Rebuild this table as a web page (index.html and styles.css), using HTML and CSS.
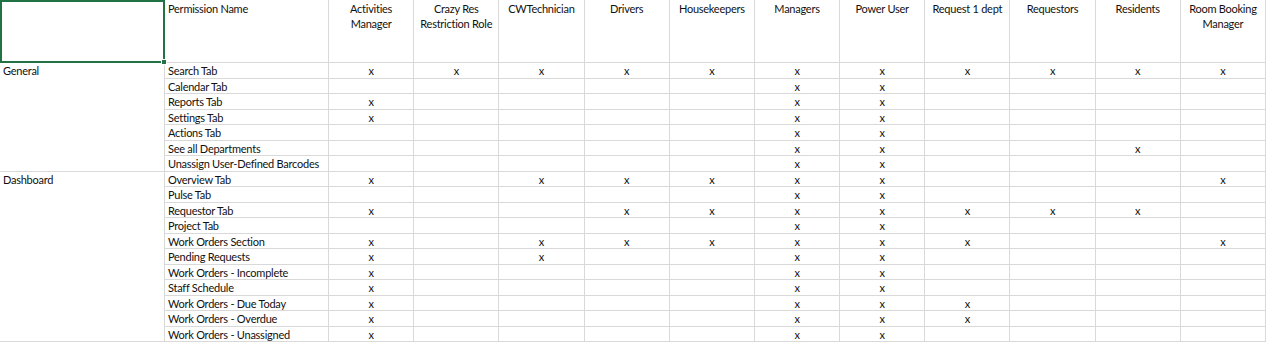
FILE: index.html
```html
<!DOCTYPE html>
<html>
<head>
<meta charset="utf-8">
<link rel="stylesheet" href="styles.css">
</head>
<body>
<div class="sheet">
  <div class="cell a1"><div class="sel"><span class="handle"></span></div></div>
  <div class="cell hd name">Permission Name</div>
  <div class="cell hd">Activities<br>Manager</div>
  <div class="cell hd">Crazy Res<br>Restriction Role</div>
  <div class="cell hd">CWTechnician</div>
  <div class="cell hd">Drivers</div>
  <div class="cell hd">Housekeepers</div>
  <div class="cell hd">Managers</div>
  <div class="cell hd">Power User</div>
  <div class="cell hd">Request 1 dept</div>
  <div class="cell hd">Requestors</div>
  <div class="cell hd">Residents</div>
  <div class="cell hd">Room Booking<br>Manager</div>

  <div class="cell grp grp-general">General</div>
  <div class="cell grp grp-dash">Dashboard</div>

  <div class="cell name">Search Tab</div>
  <div class="cell">x</div><div class="cell">x</div><div class="cell">x</div><div class="cell">x</div><div class="cell">x</div><div class="cell">x</div><div class="cell">x</div><div class="cell">x</div><div class="cell">x</div><div class="cell">x</div><div class="cell">x</div>

  <div class="cell name">Calendar Tab</div>
  <div class="cell"></div><div class="cell"></div><div class="cell"></div><div class="cell"></div><div class="cell"></div><div class="cell">x</div><div class="cell">x</div><div class="cell"></div><div class="cell"></div><div class="cell"></div><div class="cell"></div>

  <div class="cell name">Reports Tab</div>
  <div class="cell">x</div><div class="cell"></div><div class="cell"></div><div class="cell"></div><div class="cell"></div><div class="cell">x</div><div class="cell">x</div><div class="cell"></div><div class="cell"></div><div class="cell"></div><div class="cell"></div>

  <div class="cell name">Settings Tab</div>
  <div class="cell">x</div><div class="cell"></div><div class="cell"></div><div class="cell"></div><div class="cell"></div><div class="cell">x</div><div class="cell">x</div><div class="cell"></div><div class="cell"></div><div class="cell"></div><div class="cell"></div>

  <div class="cell name">Actions Tab</div>
  <div class="cell"></div><div class="cell"></div><div class="cell"></div><div class="cell"></div><div class="cell"></div><div class="cell">x</div><div class="cell">x</div><div class="cell"></div><div class="cell"></div><div class="cell"></div><div class="cell"></div>

  <div class="cell name">See all Departments</div>
  <div class="cell"></div><div class="cell"></div><div class="cell"></div><div class="cell"></div><div class="cell"></div><div class="cell">x</div><div class="cell">x</div><div class="cell"></div><div class="cell"></div><div class="cell">x</div><div class="cell"></div>

  <div class="cell name">Unassign User-Defined Barcodes</div>
  <div class="cell"></div><div class="cell"></div><div class="cell"></div><div class="cell"></div><div class="cell"></div><div class="cell">x</div><div class="cell">x</div><div class="cell"></div><div class="cell"></div><div class="cell"></div><div class="cell"></div>

  <div class="cell name">Overview Tab</div>
  <div class="cell">x</div><div class="cell"></div><div class="cell">x</div><div class="cell">x</div><div class="cell">x</div><div class="cell">x</div><div class="cell">x</div><div class="cell"></div><div class="cell"></div><div class="cell"></div><div class="cell">x</div>

  <div class="cell name">Pulse Tab</div>
  <div class="cell"></div><div class="cell"></div><div class="cell"></div><div class="cell"></div><div class="cell"></div><div class="cell">x</div><div class="cell">x</div><div class="cell"></div><div class="cell"></div><div class="cell"></div><div class="cell"></div>

  <div class="cell name">Requestor Tab</div>
  <div class="cell">x</div><div class="cell"></div><div class="cell"></div><div class="cell">x</div><div class="cell">x</div><div class="cell">x</div><div class="cell">x</div><div class="cell">x</div><div class="cell">x</div><div class="cell">x</div><div class="cell"></div>

  <div class="cell name">Project Tab</div>
  <div class="cell"></div><div class="cell"></div><div class="cell"></div><div class="cell"></div><div class="cell"></div><div class="cell">x</div><div class="cell">x</div><div class="cell"></div><div class="cell"></div><div class="cell"></div><div class="cell"></div>

  <div class="cell name">Work Orders Section</div>
  <div class="cell">x</div><div class="cell"></div><div class="cell">x</div><div class="cell">x</div><div class="cell">x</div><div class="cell">x</div><div class="cell">x</div><div class="cell">x</div><div class="cell"></div><div class="cell"></div><div class="cell">x</div>

  <div class="cell name">Pending Requests</div>
  <div class="cell">x</div><div class="cell"></div><div class="cell">x</div><div class="cell"></div><div class="cell"></div><div class="cell">x</div><div class="cell">x</div><div class="cell"></div><div class="cell"></div><div class="cell"></div><div class="cell"></div>

  <div class="cell name">Work Orders - Incomplete</div>
  <div class="cell">x</div><div class="cell"></div><div class="cell"></div><div class="cell"></div><div class="cell"></div><div class="cell">x</div><div class="cell">x</div><div class="cell"></div><div class="cell"></div><div class="cell"></div><div class="cell"></div>

  <div class="cell name">Staff Schedule</div>
  <div class="cell">x</div><div class="cell"></div><div class="cell"></div><div class="cell"></div><div class="cell"></div><div class="cell">x</div><div class="cell">x</div><div class="cell"></div><div class="cell"></div><div class="cell"></div><div class="cell"></div>

  <div class="cell name">Work Orders - Due Today</div>
  <div class="cell">x</div><div class="cell"></div><div class="cell"></div><div class="cell"></div><div class="cell"></div><div class="cell">x</div><div class="cell">x</div><div class="cell">x</div><div class="cell"></div><div class="cell"></div><div class="cell"></div>

  <div class="cell name">Work Orders - Overdue</div>
  <div class="cell">x</div><div class="cell"></div><div class="cell"></div><div class="cell"></div><div class="cell"></div><div class="cell">x</div><div class="cell">x</div><div class="cell">x</div><div class="cell"></div><div class="cell"></div><div class="cell"></div>

  <div class="cell name">Work Orders - Unassigned</div>
  <div class="cell">x</div><div class="cell"></div><div class="cell"></div><div class="cell"></div><div class="cell"></div><div class="cell">x</div><div class="cell">x</div><div class="cell"></div><div class="cell"></div><div class="cell"></div><div class="cell"></div>
</div>
</body>
</html>
```

FILE: styles.css
```css
html, body {
  margin: 0;
  padding: 0;
  background: #ffffff;
}

body {
  width: 1266px;
  height: 342px;
  overflow: hidden;
  font-family: Lato, "Open Sans", "Liberation Sans", sans-serif;
  font-size: 11px;
  letter-spacing: -0.25px;
  color: #111111;
}

.sheet {
  display: grid;
  width: 1266px;
  grid-template-columns: 165px 164px repeat(11, 1fr);
  grid-template-rows: 63px repeat(18, 15.5px);
}

.cell {
  box-sizing: border-box;
  border-right: 1px solid #d9d9d9;
  border-bottom: 1px solid #d9d9d9;
  line-height: 15px;
  text-align: center;
  white-space: nowrap;
  overflow: hidden;
}

.hd {
  padding-top: 1px;
  line-height: 15px;
}

.name {
  text-align: left;
  padding-left: 3px;
}

.grp {
  text-align: left;
  padding-left: 3px;
  grid-column: 1;
}

.grp-general {
  grid-row: 2 / span 7;
}

.grp-dash {
  grid-row: 9 / span 11;
}

.a1 {
  position: relative;
  overflow: visible;
  z-index: 2;
}

.sel {
  position: absolute;
  left: 0;
  top: 0;
  right: -1px;
  bottom: -1px;
  border: 2px solid #217346;
}

.handle {
  position: absolute;
  right: -4px;
  bottom: -4px;
  width: 4px;
  height: 4px;
  background: #217346;
  border: 1px solid #ffffff;
}
```
